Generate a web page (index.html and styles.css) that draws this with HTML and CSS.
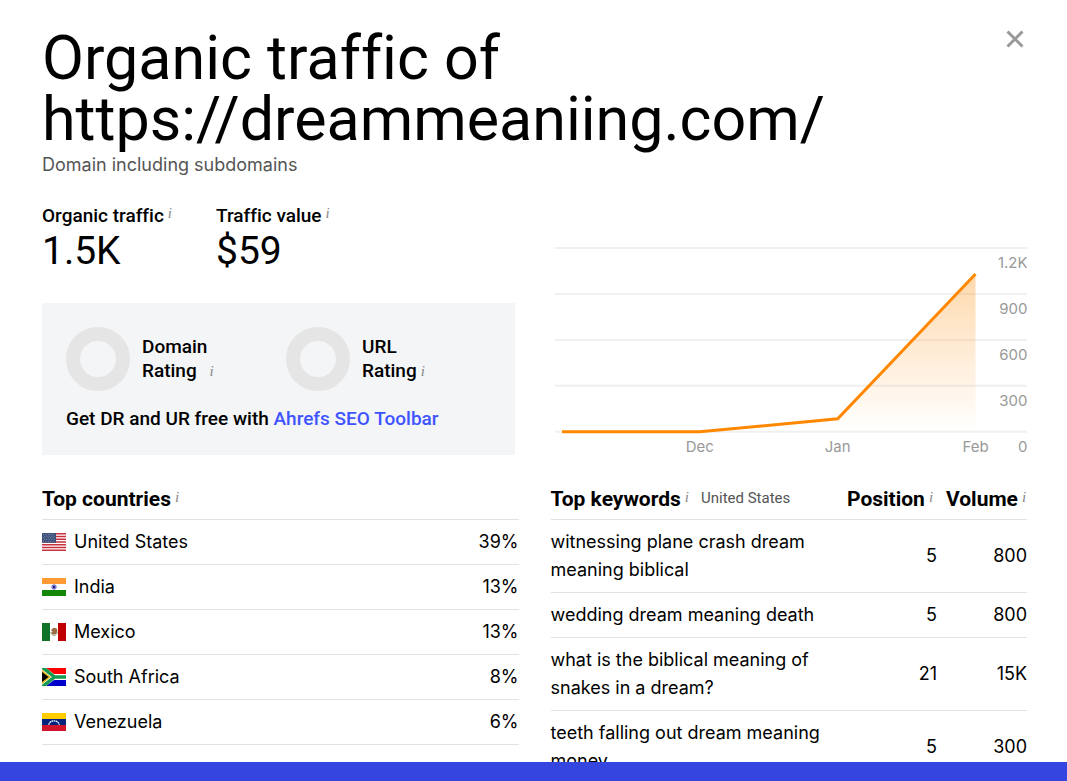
FILE: index.html
```html
<!DOCTYPE html>
<html lang="en">
<head>
    <meta charset="UTF-8">
    <meta name="viewport" content="width=device-width, initial-scale=1.0">
    <title>Organic traffic of https://dreammeaniing.com/</title>
    <link rel="stylesheet" href="styles.css">
</head>
<body>
    <main class="modal">
        <header class="modal-header">
            <h1>Organic traffic of https://dreammeaniing.com/</h1>
            <button class="close" type="button" aria-label="Close">
                <svg width="18" height="18" viewBox="0 0 18 18"><path d="M1.5 1.5l15 15M16.5 1.5l-15 15" stroke="#999" stroke-width="3" fill="none"/></svg>
            </button>
        </header>
        <p class="mode">Domain including subdomains</p>

        <section class="overview">
            <div>
                <div class="metrics">
                    <div class="metric">
                        <h2>Organic traffic<sup class="info">i</sup></h2>
                        <p class="value">1.5K</p>
                    </div>
                    <div class="metric">
                        <h2>Traffic value<sup class="info">i</sup></h2>
                        <p class="value">$59</p>
                    </div>
                </div>
                <div class="toolbar-promo">
                    <div class="ratings">
                        <div class="rating">
                            <span class="ring"></span>
                            <span>Domain<br>Rating <span class="info wide">i</span></span>
                        </div>
                        <div class="rating">
                            <span class="ring"></span>
                            <span>URL<br>Rating<span class="info">i</span></span>
                        </div>
                    </div>
                    <p>Get DR and UR free with <a href="#">Ahrefs SEO Toolbar</a></p>
                </div>
            </div>
            <svg class="chart" viewBox="0 0 473 212">
                <defs>
                    <linearGradient id="fill" x1="0" y1="0" x2="0" y2="1">
                        <stop offset="0" stop-color="#ff8800" stop-opacity="0.32"/>
                        <stop offset="1" stop-color="#ff8800" stop-opacity="0"/>
                    </linearGradient>
                </defs>
                <path class="grid" d="M0 5H473M0 51H473M0 97H473M0 143H473M0 189H473"/>
                <path fill="url(#fill)" d="M7 189L145 189L283 176L421 31V189Z"/>
                <path class="line" d="M7 189L145 189L283 176L421 31"/>
                <g class="axis-y">
                    <text x="473" y="25">1.2K</text>
                    <text x="473" y="71">900</text>
                    <text x="473" y="117">600</text>
                    <text x="473" y="163">300</text>
                    <text x="473" y="209">0</text>
                </g>
                <g class="axis-x">
                    <text x="145" y="209">Dec</text>
                    <text x="283" y="209">Jan</text>
                    <text x="421" y="209">Feb</text>
                </g>
            </svg>
        </section>

        <section class="tables">
            <table class="countries">
                <thead>
                    <tr><th colspan="2">Top countries<sup class="info">i</sup></th></tr>
                </thead>
                <tbody>
                    <tr>
                        <td><svg class="flag" viewBox="0 0 24 18">
                            <path fill="#fff" d="M0 0h24v18H0z"/>
                            <path stroke="#c8313e" stroke-width="1.4" d="M0 .7h24M0 3.5h24M0 6.2h24M0 9h24M0 11.8h24M0 14.5h24M0 17.3h24"/>
                            <path fill="#3c4f78" d="M0 0h14v9.7H0z"/>
                            <path stroke="#8c9ab5" stroke-width=".8" stroke-dasharray="1 1.4" d="M1 1.5h12M2 3.2h11M1 4.9h12M2 6.6h11M1 8.3h12"/>
                        </svg>United States</td>
                        <td>39%</td>
                    </tr>
                    <tr>
                        <td><svg class="flag" viewBox="0 0 24 18">
                            <path fill="#fff" d="M0 0h24v18H0z"/>
                            <path fill="#ff9933" d="M0 0h24v6H0z"/>
                            <path fill="#138808" d="M0 12h24v6H0z"/>
                            <circle cx="12" cy="9" r="2.3" fill="#9c9cd8" stroke="#5a5ab8" stroke-width=".7"/>
                            <circle cx="12" cy="9" r="1.2" fill="#1a1a88"/>
                        </svg>India</td>
                        <td>13%</td>
                    </tr>
                    <tr>
                        <td><svg class="flag" viewBox="0 0 24 18">
                            <path fill="#fff" d="M0 0h24v18H0z"/>
                            <path fill="#107228" d="M0 0h8v18H0z"/>
                            <path fill="#c00000" d="M16 0h8v18h-8z"/>
                            <path fill="#9a6a45" d="M9 7l2.5-2.3 3 .6 1 2.7-1.5 3-2.8.6-2.4-1.6 1.8-1z"/>
                            <path fill="none" stroke="#8c9b70" stroke-width="1" d="M8.8 9c.5 4.5 6 4.5 6.5 0"/>
                        </svg>Mexico</td>
                        <td>13%</td>
                    </tr>
                    <tr>
                        <td><svg class="flag" viewBox="0 0 24 18">
                            <path fill="#fff" d="M0 0h24v18H0z"/>
                            <path fill="#ff0000" d="M4 0h20v6H12z"/>
                            <path fill="#0000cc" d="M4 18h20v-6H12z"/>
                            <path fill="none" stroke="#159a50" stroke-width="3.4" d="M0 -1L12.5 9L0 19M12 9h12"/>
                            <path fill="#e8b820" d="M0 2L9 9L0 16z"/>
                            <path fill="#000" d="M0 4L6.5 9L0 14z"/>
                        </svg>South Africa</td>
                        <td>8%</td>
                    </tr>
                    <tr>
                        <td><svg class="flag" viewBox="0 0 24 18">
                            <path fill="#ffcc00" d="M0 0h24v6H0z"/>
                            <path fill="#00247d" d="M0 6h24v6H0z"/>
                            <path fill="#cf142b" d="M0 12h24v6H0z"/>
                            <path fill="none" stroke="#fff" stroke-width="1.3" stroke-dasharray="1.7 .5" d="M6.8 11.8c.6-5.2 9.8-5.2 10.4 0"/>
                        </svg>Venezuela</td>
                        <td>6%</td>
                    </tr>
                </tbody>
            </table>

            <table class="keywords">
                <thead>
                    <tr>
                        <th>Top keywords<sup class="info">i</sup><span class="country">United States</span></th>
                        <th>Position<sup class="info">i</sup></th>
                        <th>Volume<sup class="info">i</sup></th>
                    </tr>
                </thead>
                <tbody>
                    <tr><td>witnessing plane crash dream meaning biblical</td><td>5</td><td>800</td></tr>
                    <tr><td>wedding dream meaning death</td><td>5</td><td>800</td></tr>
                    <tr><td>what is the biblical meaning of snakes in a dream?</td><td>21</td><td>15K</td></tr>
                    <tr><td>teeth falling out dream meaning money</td><td>5</td><td>300</td></tr>
                </tbody>
            </table>
        </section>
    </main>
</body>
</html>
```
FILE: styles.css
```css
* {
    box-sizing: border-box;
}
body {
    margin: 0;
    height: 100vh;
    padding-bottom: 19px;
    background: #3545e0;
    color: #000;
    font-family: Inter, "Liberation Sans", sans-serif;
    font-size: 18px;
    line-height: 28px;
}
h1, h2, p {
    margin: 0;
}
.modal {
    height: 100%;
    overflow: hidden;
    padding: 28px 40px 0 42px;
    background: #fff;
}
.modal-header {
    display: flex;
    justify-content: space-between;
    align-items: flex-start;
}
h1 {
    max-width: 820px;
    font: 400 61px/61px Roboto, sans-serif;
    font-variant-ligatures: none;
}
.close {
    margin: 2px 3px 0 0;
    padding: 0;
    border: 0;
    background: none;
    line-height: 0;
    cursor: pointer;
}
.mode {
    margin-top: 1px;
    color: #555;
}
.overview {
    display: grid;
    grid-template-columns: minmax(0, 1fr) minmax(0, 1fr);
    gap: 40px;
    align-items: end;
    margin-top: 24px;
}
.metrics {
    display: flex;
    gap: 44px;
}
.metric h2 {
    font: 500 19px/26px Roboto, sans-serif;
    font-variant-ligatures: none;
}
.value {
    font: 400 39px/44px Roboto, sans-serif;
}
.info {
    margin-left: 4px;
    color: #888;
    font: italic 400 15px/12px "Liberation Serif", serif;
    vertical-align: 4px;
}
.toolbar-promo {
    margin-top: 30px;
    padding: 24px;
    background: #f3f5f7;
    font: 500 19px/24px Roboto, sans-serif;
}
.ratings {
    display: grid;
    grid-template-columns: 220px 1fr;
}
.rating {
    display: flex;
    align-items: center;
    gap: 12px;
}
.rating .info {
    vertical-align: 1px;
}
.rating .wide {
    margin-left: 8px;
}
.ring {
    width: 64px;
    height: 64px;
    border: 14px solid #e5e5e5;
    border-radius: 50%;
}
.toolbar-promo p {
    margin-top: 16px;
}
.toolbar-promo a {
    color: #3f54ff;
    text-decoration: none;
}
.chart {
    display: block;
    width: 100%;
    font-size: 15px;
}
.chart text {
    fill: #999;
}
.grid {
    stroke: #f0f0f0;
    stroke-width: 2;
}
.line {
    fill: none;
    stroke: #ff8800;
    stroke-width: 3;
}
.axis-y {
    text-anchor: end;
}
.axis-x {
    text-anchor: middle;
}
.tables {
    display: grid;
    grid-template-columns: 1fr 1fr;
    gap: 32px;
    align-items: start;
    margin-top: 24px;
}
table {
    width: 100%;
    border-collapse: collapse;
}
th, td {
    padding: 8px 0;
    border-bottom: 1px solid #e2e2e2;
    text-align: left;
}
th {
    padding: 6px 0;
    font: 700 21px/28px Roboto, sans-serif;
    white-space: nowrap;
}
.countries td:last-child {
    text-align: right;
}
.flag {
    width: 24px;
    height: 18px;
    margin-right: 8px;
    vertical-align: -3px;
}
.keywords {
    table-layout: fixed;
}
.keywords td:first-child {
    padding-right: 16px;
}
.keywords td:nth-child(n+2) {
    text-align: right;
}
.keywords th:nth-child(2) {
    width: 90px;
}
.keywords th:nth-child(3) {
    width: 90px;
    padding-left: 9px;
}
.country {
    margin-left: 12px;
    color: #555;
    font-size: 15px;
    font-weight: 400;
    line-height: 20px;
    vertical-align: 3px;
}
```
